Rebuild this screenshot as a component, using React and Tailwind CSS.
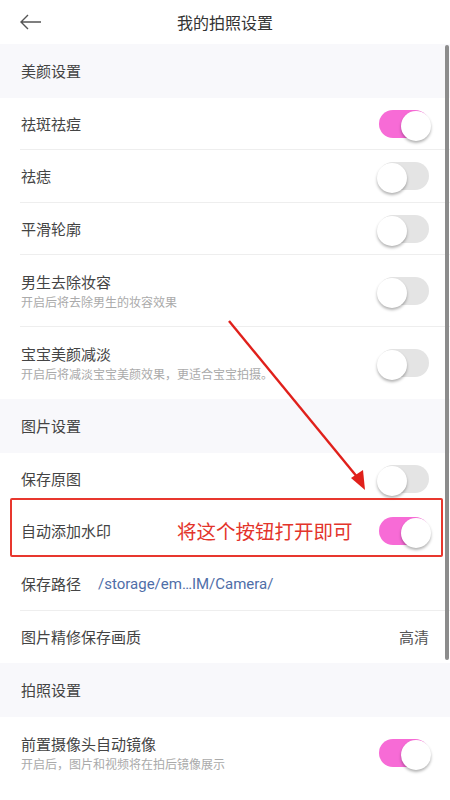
import React from "react";

const Toggle = ({ on }) => (
  <div className={`relative h-[28px] w-[50px] shrink-0 rounded-full ${on ? "bg-[#f76bd6]" : "bg-[#e4e4e4]"}`}>
    <div
      className={`absolute top-[1px] h-[30px] w-[30px] rounded-full bg-white shadow-[0_2px_3px_rgba(0,0,0,0.3)] ${
        on ? "right-[-2px]" : "left-[-2px]"
      }`}
    />
  </div>
);

const Section = ({ title }) => (
  <div className="flex h-[54px] items-center bg-[#f8f8fb] pl-[21px] text-[15px] text-[#444]">{title}</div>
);

const Row = ({ title, sub, on, last, right, h }) => (
  <div
    className={`ml-[20px] flex items-center pr-[21px] ${h ? h : sub ? "h-[72px]" : "h-[52px]"} ${
      last ? "" : "border-b border-[#eeeeee]"
    }`}
  >
    <div className="flex flex-1 flex-col pl-[1px]">
      <span className="text-[15px] leading-[20px] text-[#444]">{title}</span>
      {sub && <span className="mt-[2px] text-[12px] leading-[16px] text-[#aaa]">{sub}</span>}
    </div>
    {right ? right : <Toggle on={on} />}
  </div>
);

export default function App() {
  return (
    <div
      className="relative h-[800px] w-[450px] overflow-hidden bg-white"
      style={{ fontFamily: '"Noto Sans CJK SC", "Noto Sans", sans-serif' }}
    >
      <header className="relative flex h-[44px] items-center justify-center bg-white">
        <svg className="absolute left-[19px] top-[13px]" width="23" height="18" viewBox="0 0 23 18" fill="none" stroke="#555" strokeWidth="1.4">
          <path d="M22 9H2M9 2L2 9l7 7" />
        </svg>
        <span className="text-[16px] text-[#333]">我的拍照设置</span>
      </header>

      <Section title="美颜设置" />
      <Row title="祛斑祛痘" on />
      <Row title="祛痣" h="h-[53px]" />
      <Row title="平滑轮廓" />
      <Row title="男生去除妆容" sub="开启后将去除男生的妆容效果" />
      <Row title="宝宝美颜减淡" sub="开启后将减淡宝宝美颜效果，更适合宝宝拍摄。" last />

      <Section title="图片设置" />
      <Row title="保存原图" last />
      <Row title="自动添加水印" on last />
      <Row
        h="h-[54px]"
        title={
          <span className="flex items-center">
            保存路径
            <span className="ml-[17px] text-[#4f6ea8]" style={{ fontFamily: '"Roboto", "Noto Sans", sans-serif' }}>
              /storage/em…IM/Camera/
            </span>
          </span>
        }
        right={<span />}
      />
      <Row title="图片精修保存画质" right={<span className="text-[15px] text-[#555]">高清</span>} last />

      <Section title="拍照设置" />
      <Row title="前置摄像头自动镜像" sub="开启后，图片和视频将在拍后镜像展示" on last />

      {/* scrollbar */}
      <div className="absolute left-[445px] top-[45px] h-[615px] w-[4px] rounded-full bg-[#8c8c8c]" />

      {/* annotation */}
      <div className="absolute left-[10px] top-[498px] h-[59px] w-[433px] rounded-[2px] border-2 border-[#e8372e]" />
      <span className="absolute left-[177px] top-[517px] text-[19.5px] leading-[28px] text-[#e3342b]">将这个按钮打开即可</span>
      <svg className="absolute left-0 top-0" width="450" height="800">
        <line x1="229" y1="321" x2="358" y2="478" stroke="#e0201b" strokeWidth="2.4" />
        <polygon points="365,490 351,478 363,470" fill="#e0201b" />
      </svg>
    </div>
  );
}
